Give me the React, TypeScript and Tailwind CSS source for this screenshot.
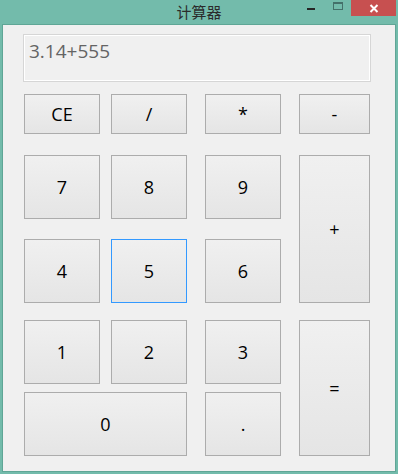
import React from 'react';

type Key = { label: string; cls: string; focus?: boolean };

const keys: Key[] = [
  { label: 'CE', cls: 'col-start-1 row-start-1' },
  { label: '/', cls: 'col-start-3 row-start-1' },
  { label: '*', cls: 'col-start-5 row-start-1' },
  { label: '-', cls: 'col-start-7 row-start-1' },
  { label: '7', cls: 'col-start-1 row-start-3' },
  { label: '8', cls: 'col-start-3 row-start-3' },
  { label: '9', cls: 'col-start-5 row-start-3' },
  { label: '+', cls: 'col-start-7 row-start-3 row-end-6' },
  { label: '4', cls: 'col-start-1 row-start-5' },
  { label: '5', cls: 'col-start-3 row-start-5', focus: true },
  { label: '6', cls: 'col-start-5 row-start-5' },
  { label: '1', cls: 'col-start-1 row-start-7' },
  { label: '2', cls: 'col-start-3 row-start-7' },
  { label: '3', cls: 'col-start-5 row-start-7' },
  { label: '=', cls: 'col-start-7 row-start-7 row-end-10' },
  { label: '0', cls: 'col-start-1 col-end-4 row-start-9' },
  { label: '.', cls: 'col-start-5 row-start-9' },
];

const App: React.FC = () => {
  return (
    <div className="w-[398px] h-[474px] bg-[#73bbab] flex flex-col overflow-hidden">
      {/* Title bar */}
      <div className="relative h-[24px] flex items-start shrink-0">
        <div className="absolute inset-0 flex items-center justify-center text-[15px] text-[#2b2b2b] leading-none pb-[1px] font-['Noto_Sans_CJK_SC',sans-serif]">
          计算器
        </div>
        <div className="ml-auto flex items-start mr-[2px] relative">
          <div className="w-[8px] h-[2px] bg-[#262626] mt-[8px]" />
          <div className="w-[10px] h-[8px] border border-t-2 border-[#44706a] mt-[2px] ml-[18px]" />
          <div className="w-[45px] h-[16px] bg-[#c75050] ml-[8px] flex items-center justify-center">
            <svg width="10" height="9" viewBox="0 0 10 9">
              <path d="M1.5 1 L8.5 8 M8.5 1 L1.5 8" stroke="#fff" strokeWidth="2" />
            </svg>
          </div>
        </div>
      </div>

      {/* Client area */}
      <div className="mx-[2px] h-[448px] border border-[#5fa696] bg-[#f0f0f0] font-['Open_Sans',sans-serif]">
        <div className="ml-[20px] mt-[9px] w-[348px] h-[48px] border border-[#d6d6d6] shadow-[inset_0_0_0_1px_#ffffff] px-[5px] pt-[3px] text-[19px] leading-[26px] text-[#646464]">
          3.14+555
        </div>

        <div className="ml-[21px] mt-[12px] grid grid-cols-[76px_11px_76px_18px_76px_18px_71px] grid-rows-[40px_21px_64px_20px_64px_17px_64px_8px_64px]">
          {keys.map((k) => (
            <button
              key={k.label}
              className={`${k.cls} border ${k.focus ? 'border-[#3399ff]' : 'border-[#acacac]'} bg-gradient-to-b from-[#f0f0f0] to-[#e5e5e5] flex items-center justify-center text-[18px] text-black leading-none`}
            >
              {k.label}
            </button>
          ))}
        </div>
      </div>
    </div>
  );
};

export default App;
